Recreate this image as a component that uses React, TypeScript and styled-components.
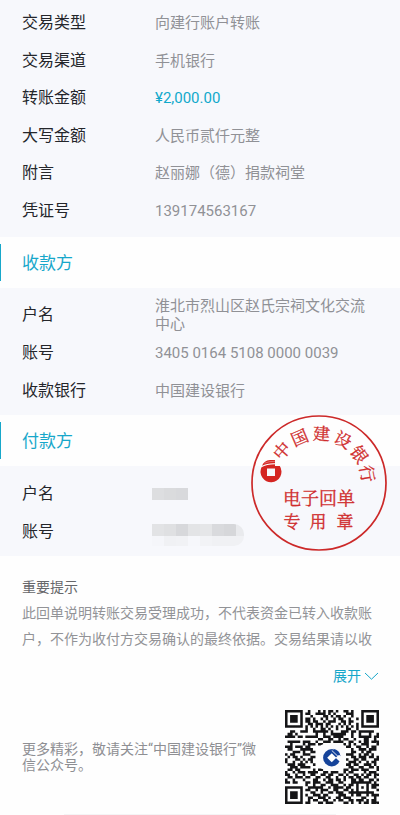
import React from "react";
import styled, { createGlobalStyle } from "styled-components";

const GlobalStyle = createGlobalStyle`
  * { box-sizing: border-box; }
  body {
    margin: 0;
    background: #fefefe;
    font-family: Roboto, "Noto Sans CJK SC", sans-serif;
  }
`;

const Page = styled.main`
  display: flex;
  flex-direction: column;
`;

const Details = styled.dl<{ $top: number; $bottom: number }>`
  margin: 0;
  padding: ${(p) => p.$top}px 22px ${(p) => p.$bottom}px;
  background: #f7f8fc;
`;

const Row = styled.div<{ $tight?: boolean }>`
  display: grid;
  grid-template-columns: 133px 1fr;
  align-items: center;
  height: ${(p) => (p.$tight ? 37 : 38)}px;
`;

const Label = styled.dt`
  font-size: 16px;
  line-height: 24px;
  color: #24262b;
`;

const Value = styled.dd<{ $accent?: boolean }>`
  margin: 0;
  font-size: 15px;
  line-height: 18px;
  color: ${(p) => (p.$accent ? "#10a9cb" : "#909196")};
`;

const Heading = styled.h2`
  display: flex;
  align-items: center;
  height: 51px;
  margin: 0;
  font-size: 17px;
  font-weight: 400;
  line-height: 24px;
  color: #17a7ca;

  &::before {
    content: "";
    width: 1px;
    height: 37px;
    margin-right: 21px;
    background: #17a7ca;
  }
`;

const Payer = styled.section`
  position: relative;
`;

const SealMark = styled.svg`
  position: absolute;
  top: 0;
  right: 13px;
  width: 136px;
  height: 136px;
  font-family: "Noto Serif CJK SC", "Noto Sans CJK SC", serif;
  text-anchor: middle;
  fill: #cf2b2b;

  text {
    stroke: #cf2b2b;
    stroke-width: 0.3;
  }
`;

const Mosaic = styled.div<{ $columns: number }>`
  display: grid;
  grid-template-columns: repeat(${(p) => p.$columns}, 12px);
  grid-auto-rows: 12px;
  width: 92px;
  margin-left: -3px;
  overflow: hidden;
  border-radius: 0 10px 10px 0;
`;

const AccountMosaic = styled(Mosaic)`
  margin-top: 6px;
  grid-auto-rows: 12px 10px;
`;

const Tile = styled.span<{ $tone: string }>`
  background: ${(p) => p.$tone};
`;

const Notice = styled.section`
  display: flex;
  flex-direction: column;
  padding: 18px 21px 0 22px;
  font-size: 14px;
`;

const NoticeTitle = styled.h3`
  margin: 0;
  font-size: 14px;
  font-weight: 400;
  line-height: 26px;
  color: #66676a;
`;

const NoticeText = styled.p`
  margin: 0;
  line-height: 26px;
  color: #929397;
`;

const Expand = styled.button`
  display: flex;
  align-items: center;
  gap: 3px;
  align-self: flex-end;
  margin-top: 12px;
  padding: 0;
  border: 0;
  background: none;
  font: inherit;
  line-height: 24px;
  color: #17a7ca;
`;

const Footer = styled.footer`
  display: flex;
  align-items: center;
  justify-content: space-between;
  gap: 24px;
  padding: 22px 21px 0 22px;
`;

const FollowText = styled.p`
  flex: 1;
  margin: 0;
  font-size: 14px;
  line-height: 16px;
  color: #8e8f93;
`;

const QrCode = styled.svg`
  flex: none;
  width: 94px;
  height: 94px;
`;

const BottomRule = styled.div`
  width: 68%;
  height: 1px;
  margin: 10px auto 0 16%;
  background: #f4f4f5;
`;

const sealName = [
  ["中", -49], ["国", -23], ["建", 3], ["设", 29], ["银", 55], ["行", 79],
] as const;

function Seal() {
  return (
    <SealMark viewBox="0 0 136 136" role="img" aria-label="中国建设银行电子回单专用章">
      <circle cx="68" cy="68" r="67" fill="none" stroke="#cc2929" strokeWidth="1.7" />
      {sealName.map(([ch, angle]) => (
        <text key={ch} x="68" y="25" fontSize="17" transform={`rotate(${angle} 68 68)`}>{ch}</text>
      ))}
      <path
        fillRule="evenodd"
        d="M10.5 52.2 Q15.5 49.4 24 49.3 V51 H28.8 A10.5 10.5 0 1 1 10.5 52.2Z M16 53.5 V61 H24 V53.5Z"
        fill="#d42522"
      />
      <path d="M11 50.8 Q13 45.5 19 45 H24 V48.3 Q16 48 11 50.8Z" fill="#d42522" />
      <path d="M13.5 48.2 Q18 46.2 24 46.3" fill="none" stroke="#f7b9b8" strokeWidth="0.5" />
      <text x="68" y="90" fontSize="18">电子回单</text>
      <text x="41" y="113" fontSize="17">专</text>
      <text x="67" y="113" fontSize="17">用</text>
      <text x="94" y="113" fontSize="17">章</text>
    </SealMark>
  );
}

const qrRows = [
  "1111111001000101011010011010001111111",
  "1000001011001111010100001110001000001",
  "1011101000100001101011010010001011101",
  "1011101011010010100101100100101011101",
  "1011101011011001011100110110001011101",
  "1000001001101110110001010100101000001",
  "1111111010101010101010101010101111111",
  "0000000010010011010010001100100000000",
  "0011001110011111101000111011011111100",
  "0110100000001001001111110010010001001",
  "1111011011111001110111100010011111011",
  "0000000000000110011001011001000110010",
  "0111110111001001110111100110010110111",
  "0010000101110110000000010101001110001",
  "1110111011000000000000001100110010110",
  "0110001111100000000000000010011101110",
  "0001110100110000000000000011001011000",
  "1011000111000000000000001110010110100",
  "0101101000110000000000000011011101101",
  "1000110101100000000000001001101100011",
  "1001001010100000000000000111010010110",
  "0111011100010000000000001101100111010",
  "0011101111000000000000000110011001101",
  "0110110000010110000000011011101110001",
  "1001011101111001101110010110000101110",
  "1100100100110011011001101001101011011",
  "0110111011001100110010010110110110010",
  "1001000100011001011011010011011001101",
  "1101100011011100111001100011111111010",
  "0000000010010011001110010110100010111",
  "1111111001111110010111101100101010110",
  "1000001011001011100110011010100010001",
  "1011101000110010011011100111111111100",
  "1011101010011101100001110010110010111",
  "1011101001100111010011011100001100010",
  "1000001001011001100101100110111010110",
  "1111111011000110111000011010010110111",
];

function Qr() {
  const modules = qrRows
    .flatMap((row, y) => [...row].map((bit, x) => (bit === "1" ? `M${x} ${y}h1v1h-1z` : "")))
    .join("");
  return (
    <QrCode viewBox="0 0 37 37" role="img" aria-label="微信公众号二维码">
      <path d={modules} fill="#151517" />
      <rect x="13.8" y="13.5" width="9.6" height="9.8" rx="1.5" fill="#fbfbfd" />
      <circle cx="18.4" cy="18.8" r="3.4" fill="#14429a" />
      <path d="M18.4 17 L20.2 18.8 L18.4 20.6 L16.6 18.8Z" fill="#fff" />
      <path d="M19.9 18.8 L21.2 17.7 H22.2 V20 L21.4 20.2Z" fill="#fbfbfd" />
      <path d="M18.4 15.9 L21.2 18.6" fill="none" stroke="#fff" strokeWidth="0.35" />
      <path d="M19 15.3 Q21.5 15.8 21.9 18.2Z" fill="#14429a" />
    </QrCode>
  );
}

const transfer = [
  { label: "交易类型", value: "向建行账户转账" },
  { label: "交易渠道", value: "手机银行", tight: true },
  { label: "转账金额", value: "¥2,000.00", accent: true },
  { label: "大写金额", value: "人民币贰仟元整", tight: true },
  { label: "附言", value: "赵丽娜（德）捐款祠堂" },
  { label: "凭证号", value: "139174563167" },
];

const payee = [
  { label: "户名", value: "淮北市烈山区赵氏宗祠文化交流中心" },
  { label: "账号", value: "3405 0164 5108 0000 0039" },
  { label: "收款银行", value: "中国建设银行", tight: true },
];

const nameTiles = ["#dddee0", "#dadbdd", "#d8d9dc"];
const accountTiles = [
  "#e2e3e5", "#dfe0e2", "#d7d8db", "#e3e4e6", "#e5e6e8", "#d9dadd", "#d6d7da", "#e9eaed",
  "#f5f6fa", "#f0f1f4", "#f1f2f5", "#f6f7fb", "#f2f3f6", "#f0f1f4", "#f0f1f4", "#f0f1f4",
];

type Item = { label: string; value: string; accent?: boolean; tight?: boolean };

function DetailRows({ items }: { items: Item[] }) {
  return (
    <>
      {items.map((item) => (
        <Row key={item.label} $tight={item.tight}>
          <Label>{item.label}</Label>
          <Value $accent={item.accent}>{item.value}</Value>
        </Row>
      ))}
    </>
  );
}

export default function App() {
  return (
    <>
      <GlobalStyle />
      <Page>
        <Details $top={4} $bottom={7}>
          <DetailRows items={transfer} />
        </Details>
        <section>
          <Heading>收款方</Heading>
          <Details $top={8} $bottom={6}>
            <DetailRows items={payee} />
          </Details>
        </section>
        <Payer>
          <Heading>付款方</Heading>
          <Details $top={9} $bottom={5}>
            <Row>
              <Label>户名</Label>
              <Value>
                <Mosaic $columns={3}>
                  {nameTiles.map((tone, i) => <Tile key={i} $tone={tone} />)}
                </Mosaic>
              </Value>
            </Row>
            <Row>
              <Label>账号</Label>
              <Value>
                <AccountMosaic $columns={8}>
                  {accountTiles.map((tone, i) => <Tile key={i} $tone={tone} />)}
                </AccountMosaic>
              </Value>
            </Row>
          </Details>
          <Seal />
        </Payer>
        <Notice>
          <NoticeTitle>重要提示</NoticeTitle>
          <NoticeText>
            此回单说明转账交易受理成功，不代表资金已转入收款账户，不作为收付方交易确认的最终依据。交易结果请以收
          </NoticeText>
          <Expand type="button">
            展开
            <svg width="15" height="9" viewBox="0 0 15 9" fill="none" stroke="currentColor" aria-hidden="true">
              <path d="M1 1 L7.5 7.2 L14 1" />
            </svg>
          </Expand>
        </Notice>
        <Footer>
          <FollowText>更多精彩，敬请关注“中国建设银行”微信公众号。</FollowText>
          <Qr />
        </Footer>
        <BottomRule />
      </Page>
    </>
  );
}
